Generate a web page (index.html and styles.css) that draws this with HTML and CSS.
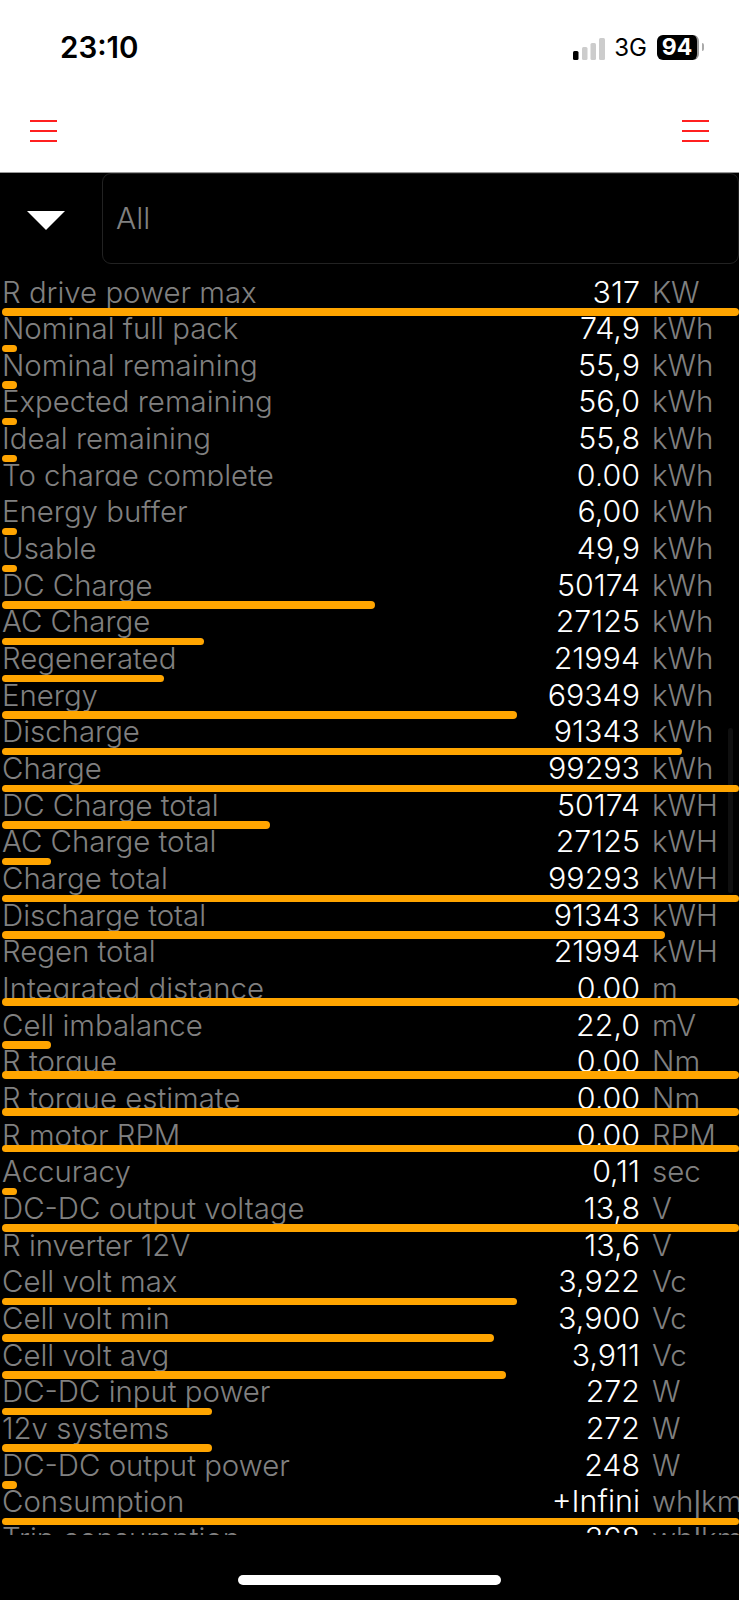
FILE: index.html
```html
<!DOCTYPE html>
<html lang="en">
<head>
<meta charset="utf-8">
<title>Battery metrics</title>
<link rel="stylesheet" href="styles.css">
</head>
<body>
<div class="app">
  <header class="top">
    <div class="status">
      <span class="clock">23:10</span>
      <div class="indicators">
        <svg class="signal" width="32" height="22" viewBox="0 0 32 22"><rect x="0" y="13" width="5.500" height="9" rx="1.500" fill="#000"/><rect x="9" y="9" width="5.500" height="13" rx="1.500" fill="#ccc"/><rect x="17.500" y="5" width="5.500" height="17" rx="1.500" fill="#ccc"/><rect x="26" y="0" width="6" height="22" rx="1.500" fill="#ccc"/></svg>
        <span class="network">3G</span>
        <div class="battery"><span class="battery-level">94</span><span class="battery-nub"></span></div>
      </div>
    </div>
    <div class="nav">
      <div class="burger"><span></span><span></span><span></span></div>
      <div class="burger"><span></span><span></span><span></span></div>
    </div>
  </header>
  <div class="filter">
    <div class="caret-cell"><svg width="38" height="19" viewBox="0 0 38 19"><path d="M0 0H38L19 19Z" fill="#fff"/></svg></div>
    <div class="select">All</div>
  </div>
  <main class="list">
    <div class="scrollbar"></div>
    <div class="row"><div class="cells"><span class="label">R drive power max</span><span class="value">317</span><span class="unit">KW</span></div><div class="bar" style="width:100%"></div></div>
    <div class="row"><div class="cells"><span class="label">Nominal full pack</span><span class="value">74,9</span><span class="unit">kWh</span></div><div class="bar" style="width:15px"></div></div>
    <div class="row"><div class="cells"><span class="label">Nominal remaining</span><span class="value">55,9</span><span class="unit">kWh</span></div><div class="bar" style="width:15px"></div></div>
    <div class="row"><div class="cells"><span class="label">Expected remaining</span><span class="value">56,0</span><span class="unit">kWh</span></div><div class="bar" style="width:15px"></div></div>
    <div class="row"><div class="cells"><span class="label">Ideal remaining</span><span class="value">55,8</span><span class="unit">kWh</span></div><div class="bar" style="width:15px"></div></div>
    <div class="row zero"><div class="cells"><span class="label">To charge complete</span><span class="value">0,00</span><span class="unit">kWh</span></div></div>
    <div class="row"><div class="cells"><span class="label">Energy buffer</span><span class="value">6,00</span><span class="unit">kWh</span></div><div class="bar" style="width:15px"></div></div>
    <div class="row"><div class="cells"><span class="label">Usable</span><span class="value">49,9</span><span class="unit">kWh</span></div><div class="bar" style="width:15px"></div></div>
    <div class="row"><div class="cells"><span class="label">DC Charge</span><span class="value">50174</span><span class="unit">kWh</span></div><div class="bar" style="width:373px"></div></div>
    <div class="row"><div class="cells"><span class="label">AC Charge</span><span class="value">27125</span><span class="unit">kWh</span></div><div class="bar" style="width:202px"></div></div>
    <div class="row"><div class="cells"><span class="label">Regenerated</span><span class="value">21994</span><span class="unit">kWh</span></div><div class="bar" style="width:162px"></div></div>
    <div class="row"><div class="cells"><span class="label">Energy</span><span class="value">69349</span><span class="unit">kWh</span></div><div class="bar" style="width:515px"></div></div>
    <div class="row"><div class="cells"><span class="label">Discharge</span><span class="value">91343</span><span class="unit">kWh</span></div><div class="bar" style="width:680px"></div></div>
    <div class="row"><div class="cells"><span class="label">Charge</span><span class="value">99293</span><span class="unit">kWh</span></div><div class="bar" style="width:100%"></div></div>
    <div class="row"><div class="cells"><span class="label">DC Charge total</span><span class="value">50174</span><span class="unit">kWH</span></div><div class="bar" style="width:268px"></div></div>
    <div class="row"><div class="cells"><span class="label">AC Charge total</span><span class="value">27125</span><span class="unit">kWH</span></div><div class="bar" style="width:49px"></div></div>
    <div class="row"><div class="cells"><span class="label">Charge total</span><span class="value">99293</span><span class="unit">kWH</span></div><div class="bar" style="width:100%"></div></div>
    <div class="row"><div class="cells"><span class="label">Discharge total</span><span class="value">91343</span><span class="unit">kWH</span></div><div class="bar" style="width:663px"></div></div>
    <div class="row"><div class="cells"><span class="label">Regen total</span><span class="value">21994</span><span class="unit">kWH</span></div></div>
    <div class="row zero"><div class="cells"><span class="label">Integrated distance</span><span class="value">0,00</span><span class="unit">m</span></div><div class="bar" style="width:100%"></div></div>
    <div class="row"><div class="cells"><span class="label">Cell imbalance</span><span class="value">22,0</span><span class="unit">mV</span></div><div class="bar" style="width:49px"></div></div>
    <div class="row zero"><div class="cells"><span class="label">R torque</span><span class="value">0,00</span><span class="unit">Nm</span></div><div class="bar" style="width:100%"></div></div>
    <div class="row zero"><div class="cells"><span class="label">R torque estimate</span><span class="value">0,00</span><span class="unit">Nm</span></div><div class="bar" style="width:100%"></div></div>
    <div class="row zero"><div class="cells"><span class="label">R motor RPM</span><span class="value">0,00</span><span class="unit">RPM</span></div><div class="bar" style="width:100%"></div></div>
    <div class="row"><div class="cells"><span class="label">Accuracy</span><span class="value">0,11</span><span class="unit">sec</span></div><div class="bar" style="width:15px"></div></div>
    <div class="row"><div class="cells"><span class="label">DC-DC output voltage</span><span class="value">13,8</span><span class="unit">V</span></div><div class="bar" style="width:100%"></div></div>
    <div class="row"><div class="cells"><span class="label">R inverter 12V</span><span class="value">13,6</span><span class="unit">V</span></div></div>
    <div class="row"><div class="cells"><span class="label">Cell volt max</span><span class="value">3,922</span><span class="unit">Vc</span></div><div class="bar" style="width:515px"></div></div>
    <div class="row"><div class="cells"><span class="label">Cell volt min</span><span class="value">3,900</span><span class="unit">Vc</span></div><div class="bar" style="width:492px"></div></div>
    <div class="row"><div class="cells"><span class="label">Cell volt avg</span><span class="value">3,911</span><span class="unit">Vc</span></div><div class="bar" style="width:504px"></div></div>
    <div class="row"><div class="cells"><span class="label">DC-DC input power</span><span class="value">272</span><span class="unit">W</span></div><div class="bar" style="width:210px"></div></div>
    <div class="row"><div class="cells"><span class="label">12v systems</span><span class="value">272</span><span class="unit">W</span></div><div class="bar" style="width:210px"></div></div>
    <div class="row"><div class="cells"><span class="label">DC-DC output power</span><span class="value">248</span><span class="unit">W</span></div><div class="bar" style="width:15px"></div></div>
    <div class="row"><div class="cells"><span class="label">Consumption</span><span class="value">+Infini</span><span class="unit">wh<span class="pipe">|</span>km</span></div><div class="bar" style="width:100%"></div></div>
    <div class="row"><div class="cells"><span class="label">Trip consumption</span><span class="value">368</span><span class="unit">wh<span class="pipe">|</span>km</span></div></div>
  </main>
  <footer class="home"><span class="home-bar"></span></footer>
</div>
</body>
</html>
```
FILE: styles.css
```css
* { box-sizing: border-box; }
html, body { margin: 0; padding: 0; background: #000; }
body { font-family: Inter, "Liberation Sans", sans-serif; }
.app { width: 739px; height: 1600px; display: flex; flex-direction: column; overflow: hidden; background: #000; }
.top { height: 173px; background: #fff; border-bottom: 1px solid #999; flex: none; }
.status { height: 100px; padding: 30px 35px 0 60px; display: flex; justify-content: space-between; align-items: flex-start; }
.clock { font-size: 29.500px; font-weight: 600; line-height: 34px; color: #000; }
.indicators { display: flex; align-items: center; height: 30px; margin-top: 2px; }
.signal { margin-right: 9px; margin-top: 4px; }
.network { font-size: 24px; font-weight: 400; color: #000; margin-right: 10px; line-height: 30px; margin-top: 2px; }
.battery { display: flex; align-items: center; gap: 3px; }
.battery-level { width: 42px; height: 25px; background: #000; border-radius: 6px; border-right: 2px solid #999; color: #fff; font-size: 23px; font-weight: 700; line-height: 25px; text-align: center; }
.battery-nub { width: 2px; height: 8px; background: #aaa; border-radius: 0 2px 2px 0; }
.nav { display: flex; justify-content: space-between; padding: 20px 30px 0; }
.burger { width: 27px; display: flex; flex-direction: column; gap: 8px; }
.burger span { display: block; height: 2px; background: #ff2020; }
.filter { flex: none; height: 101.500px; display: flex; align-items: flex-start; }
.caret-cell { width: 102px; height: 91px; flex: none; display: flex; align-items: center; padding-left: 27px; padding-top: 4px; }
.select { flex: 1; height: 91px; border: 1px solid #222; border-radius: 9px; padding-left: 13px; color: #808080; font-size: 30px; font-weight: 300; line-height: 89px; }
.list { position: relative; height: 1260.500px; flex: none; overflow: hidden; }
.scrollbar { position: absolute; right: 6px; top: 453px; width: 5px; height: 165px; background: #0f0f0f; border-radius: 3px; }
.row { height: 36.670px; position: relative; }
.cells { display: flex; padding-left: 2px; font-weight: 300; line-height: 35px; white-space: nowrap; }
.row.zero .cells { height: 27.800px; overflow: hidden; }
.label { flex: 1; color: #808080; font-size: 29.400px; }
.value { width: 150px; text-align: right; color: #fff; font-size: 30.400px; }
.unit { width: 99px; padding-left: 12px; color: #808080; flex: none; font-size: 29.500px; }
.pipe { font-family: "Liberation Sans", sans-serif; }
.bar { position: absolute; left: 2px; top: 33.500px; height: 7.500px; background: #ffa500; border-radius: 4px; max-width: calc(100% - 2px); }
.row.zero .bar { top: 27.100px; }
.home { flex: none; height: 65px; display: flex; justify-content: center; padding-top: 40px; }
.home-bar { width: 263px; height: 10px; background: #fff; border-radius: 5px; }
```
